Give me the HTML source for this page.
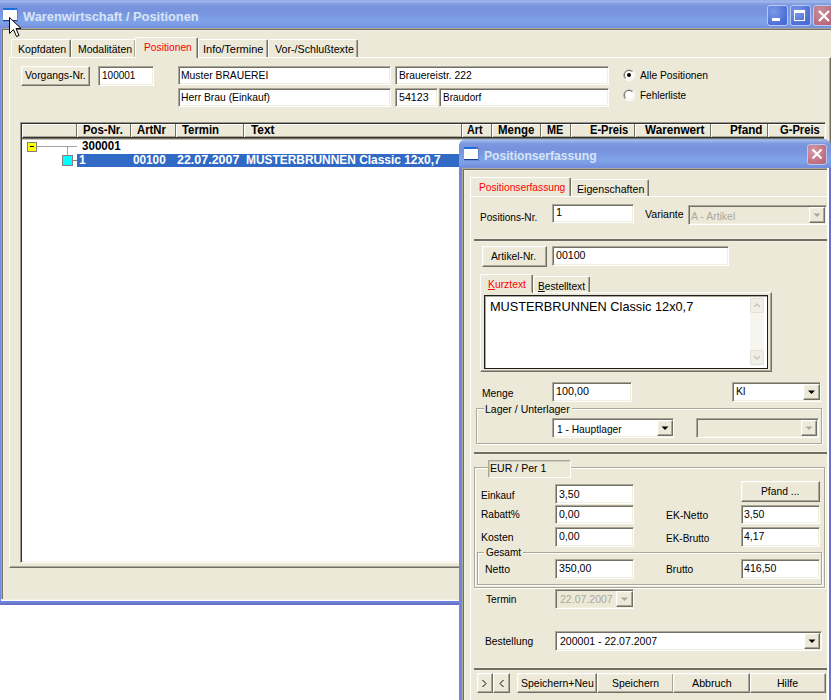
<!DOCTYPE html><html><head><meta charset="utf-8"><style>
html,body{margin:0;padding:0;background:#fff;width:831px;height:700px;overflow:hidden;position:relative}
.a{position:absolute;box-sizing:border-box}
.t{font-family:"Liberation Sans", sans-serif;white-space:nowrap}
</style></head><body>
<div class="a" style="left:0px;top:0px;width:831px;height:28px;background:linear-gradient(to bottom, #8DA5E4 0px, #9DB8EC 1px, #9CB6EB 2px, #8CA5E3 3px, #7D98DE 5px, #7892DD 9px, #7A96E0 14px, #7DA0E6 19px, #7EA3E8 22px, #7C9BE3 25px, #7590DE 27px, #7590DE 28px);"></div>
<div class="a" style="left:0px;top:28px;width:831px;height:573px;background:#ECE9D8;"></div>
<div class="a" style="left:0px;top:28px;width:831px;height:1px;background:#ACA899;"></div>
<div class="a" style="left:1px;top:29px;width:830px;height:1px;background:#716F64;"></div>
<div class="a" style="left:2px;top:30px;width:829px;height:1px;background:#F1EFE2;"></div>
<div class="a" style="left:0px;top:28px;width:1px;height:573px;background:#7489E0;"></div>
<div class="a" style="left:1px;top:28px;width:1px;height:571px;background:#ACA899;"></div>
<div class="a" style="left:2px;top:29px;width:1px;height:570px;background:#716F64;"></div>
<div class="a" style="left:3px;top:30px;width:1px;height:568px;background:#F1EFE2;"></div>
<div class="a" style="left:1px;top:599px;width:458px;height:1px;background:#F1EFE2;"></div>
<div class="a" style="left:1px;top:600px;width:458px;height:1px;background:#FFFFFF;"></div>
<div class="a" style="left:0px;top:601px;width:459px;height:4px;background:linear-gradient(#6C81D8 0,#6C81D8 1px,#7086D8 1px,#7086D8 2px,#6870C8 2px);"></div>
<svg class="a" style="left:3px;top:8px" width="16" height="14"><rect x="14" y="1" width="1" height="13" fill="#5B79CC" opacity="0.8"/><rect x="0" y="13" width="15" height="1" fill="#5B79CC" opacity="0.6"/><rect x="0" y="0" width="14" height="2" fill="#1B6DDC"/><rect x="0" y="2" width="14" height="10" fill="#FDFEFB"/><rect x="0" y="12" width="14" height="1" fill="#1E3F96"/><rect x="12" y="1" width="1" height="1" fill="#E06A55"/></svg>
<div class="a t" style="left:22.70px;top:9.70px;font-size:13px;line-height:13px;font-weight:bold;color:#D8E4F8;transform-origin:0 0;transform:scaleX(0.9871);">Warenwirtschaft / Positionen</div>
<div class="a" style="left:767px;top:5px;width:21px;height:21px;border:1px solid #B9C9F3;border-radius:3px;background:radial-gradient(circle at 30% 30%, #7D9AE8, #4C6FD8 70%, #3F66DA);"><div class="a" style="left:4px;top:12px;width:8px;height:3px;background:#fff"></div></div>
<div class="a" style="left:790px;top:5px;width:21px;height:21px;border:1px solid #B9C9F3;border-radius:3px;background:radial-gradient(circle at 30% 30%, #7D9AE8, #4C6FD8 70%, #3F66DA);"><div class="a" style="left:3px;top:4px;width:11px;height:11px;border:1px solid #fff;border-top-width:3px"></div></div>
<div class="a" style="left:813px;top:5px;width:24px;height:21px;border:1px solid #B9C9F3;border-radius:3px;background:radial-gradient(circle at 30% 30%, #C98F9C, #B86877 70%, #B05E6E);"><svg class="a" style="left:3px;top:3px" width="14" height="14"><path d="M2 2L12 12M12 2L2 12" stroke="#fff" stroke-width="2.2"/></svg></div>
<div class="a" style="left:11px;top:39px;width:60px;height:18px;background:#ECE9D8;border-left:1px solid #fff;border-top:1px solid #fff;border-right:1px solid #716F64;box-shadow:inset -1px 0 #ACA899;border-radius:2px 2px 0 0"></div>
<div class="a" style="left:71px;top:39px;width:65px;height:18px;background:#ECE9D8;border-left:1px solid #fff;border-top:1px solid #fff;border-right:1px solid #716F64;box-shadow:inset -1px 0 #ACA899;border-radius:2px 2px 0 0"></div>
<div class="a" style="left:198px;top:39px;width:70px;height:18px;background:#ECE9D8;border-left:1px solid #fff;border-top:1px solid #fff;border-right:1px solid #716F64;box-shadow:inset -1px 0 #ACA899;border-radius:2px 2px 0 0"></div>
<div class="a" style="left:268px;top:39px;width:90px;height:18px;background:#ECE9D8;border-left:1px solid #fff;border-top:1px solid #fff;border-right:1px solid #716F64;box-shadow:inset -1px 0 #ACA899;border-radius:2px 2px 0 0"></div>
<div class="a" style="left:9px;top:57px;width:822px;height:511px;border-left:1px solid #fff;border-top:1px solid #fff;border-bottom:1px solid #716F64;border-right:1px solid #716F64;box-shadow:inset -1px -1px #ACA899;"></div>
<div class="a" style="left:135px;top:37px;width:63px;height:21px;background:#ECE9D8;border-left:1px solid #fff;border-top:1px solid #fff;border-right:1px solid #716F64;box-shadow:inset -1px 0 #ACA899;border-radius:2px 2px 0 0"></div>
<div class="a" style="left:136px;top:57px;width:60px;height:1px;background:#ECE9D8"></div>
<div class="a t" style="left:18.00px;top:44.19px;font-size:11px;line-height:11px;font-weight:normal;color:#000;transform-origin:0 0;transform:scaleX(0.9613);">Kopfdaten</div>
<div class="a t" style="left:78.20px;top:44.19px;font-size:11px;line-height:11px;font-weight:normal;color:#000;transform-origin:0 0;transform:scaleX(0.9498);">Modalitäten</div>
<div class="a t" style="left:143.70px;top:42.49px;font-size:11px;line-height:11px;font-weight:normal;color:#FF0000;transform-origin:0 0;transform:scaleX(0.9307);">Positionen</div>
<div class="a t" style="left:202.60px;top:44.19px;font-size:11px;line-height:11px;font-weight:normal;color:#000;transform-origin:0 0;transform:scaleX(0.9982);">Info/Termine</div>
<div class="a t" style="left:274.80px;top:44.19px;font-size:11px;line-height:11px;font-weight:normal;color:#000;transform-origin:0 0;transform:scaleX(0.9693);">Vor-/Schlußtexte</div>
<div class="a" style="left:21px;top:66px;width:69px;height:20px;background:#ECE9D8;border-style:solid;border-width:1px;border-color:#FFFFFF #716F64 #716F64 #FFFFFF;box-shadow:inset -1px -1px #ACA899, inset 1px 1px #F1EFE2;"></div>
<div class="a t" style="left:24.50px;top:69.99px;font-size:11px;line-height:11px;font-weight:normal;color:#000;transform-origin:0 0;transform:scaleX(0.9463);">Vorgangs-Nr.</div>
<div class="a" style="left:98px;top:66px;width:56px;height:20px;background:#fff;border-style:solid;border-width:1px;border-color:#ACA899 #FFFFFF #FFFFFF #ACA899;box-shadow:inset 1px 1px #716F64, inset -1px -1px #F1EFE2;"></div>
<div class="a t" style="left:101.70px;top:70.29px;font-size:11px;line-height:11px;font-weight:normal;color:#000;transform-origin:0 0;transform:scaleX(0.9101);">100001</div>
<div class="a" style="left:178px;top:66px;width:213px;height:19px;background:#fff;border-style:solid;border-width:1px;border-color:#ACA899 #FFFFFF #FFFFFF #ACA899;box-shadow:inset 1px 1px #716F64, inset -1px -1px #F1EFE2;"></div>
<div class="a t" style="left:181.00px;top:70.29px;font-size:11px;line-height:11px;font-weight:normal;color:#000;transform-origin:0 0;transform:scaleX(0.9402);">Muster BRAUEREI</div>
<div class="a" style="left:178px;top:88px;width:213px;height:19px;background:#fff;border-style:solid;border-width:1px;border-color:#ACA899 #FFFFFF #FFFFFF #ACA899;box-shadow:inset 1px 1px #716F64, inset -1px -1px #F1EFE2;"></div>
<div class="a t" style="left:181.00px;top:91.69px;font-size:11px;line-height:11px;font-weight:normal;color:#000;transform-origin:0 0;transform:scaleX(0.9395);">Herr Brau (Einkauf)</div>
<div class="a" style="left:395px;top:66px;width:214px;height:19px;background:#fff;border-style:solid;border-width:1px;border-color:#ACA899 #FFFFFF #FFFFFF #ACA899;box-shadow:inset 1px 1px #716F64, inset -1px -1px #F1EFE2;"></div>
<div class="a t" style="left:398.50px;top:70.29px;font-size:11px;line-height:11px;font-weight:normal;color:#000;transform-origin:0 0;transform:scaleX(0.9350);">Brauereistr. 222</div>
<div class="a" style="left:395px;top:88px;width:43px;height:19px;background:#fff;border-style:solid;border-width:1px;border-color:#ACA899 #FFFFFF #FFFFFF #ACA899;box-shadow:inset 1px 1px #716F64, inset -1px -1px #F1EFE2;"></div>
<div class="a t" style="left:398.50px;top:91.69px;font-size:11px;line-height:11px;font-weight:normal;color:#000;transform-origin:0 0;transform:scaleX(0.9681);">54123</div>
<div class="a" style="left:439px;top:88px;width:170px;height:19px;background:#fff;border-style:solid;border-width:1px;border-color:#ACA899 #FFFFFF #FFFFFF #ACA899;box-shadow:inset 1px 1px #716F64, inset -1px -1px #F1EFE2;"></div>
<div class="a t" style="left:442.70px;top:91.69px;font-size:11px;line-height:11px;font-weight:normal;color:#000;transform-origin:0 0;transform:scaleX(0.9088);">Braudorf</div>
<svg class="a" style="left:623px;top:69px" width="12" height="12"><circle cx="6" cy="6" r="6" fill="#fff"/><path d="M1.76 10.24A6 6 0 0 1 10.24 1.76L6 6Z" fill="#ACA899"/><circle cx="6" cy="6" r="5" fill="#F1EFE2"/><path d="M2.46 9.54A5 5 0 0 1 9.54 2.46L6 6Z" fill="#716F64"/><circle cx="6" cy="6" r="4" fill="#fff"/><circle cx="6" cy="6" r="2" fill="#000"/></svg>
<svg class="a" style="left:623px;top:89px" width="12" height="12"><circle cx="6" cy="6" r="6" fill="#fff"/><path d="M1.76 10.24A6 6 0 0 1 10.24 1.76L6 6Z" fill="#ACA899"/><circle cx="6" cy="6" r="5" fill="#F1EFE2"/><path d="M2.46 9.54A5 5 0 0 1 9.54 2.46L6 6Z" fill="#716F64"/><circle cx="6" cy="6" r="4" fill="#fff"/></svg>
<div class="a t" style="left:639.80px;top:70.09px;font-size:11px;line-height:11px;font-weight:normal;color:#000;transform-origin:0 0;transform:scaleX(0.9346);">Alle Positionen</div>
<div class="a t" style="left:640.00px;top:90.29px;font-size:11px;line-height:11px;font-weight:normal;color:#000;transform-origin:0 0;transform:scaleX(0.9087);">Fehlerliste</div>
<div class="a" style="left:20px;top:122px;width:806px;height:441px;background:#fff;border-style:solid;border-width:1px;border-color:#9A988C #fff #fff #9A988C;box-shadow:inset 1px 1px #35332E, inset -1px -1px #F1EFE2;"></div>
<div class="a" style="left:22px;top:124px;width:802px;height:14px;background:#ECE9D8;border-top:1px solid #fff;border-left:1px solid #fff;border-bottom:1px solid #35332E;box-shadow:inset 0 -1px #ACA899"></div>
<div class="a" style="left:22px;top:138px;width:802px;height:1px;background:#716F64"></div>
<div class="a" style="left:22px;top:139px;width:802px;height:1px;background:#C4C2B8"></div>
<div class="a" style="left:76px;top:124px;width:1px;height:13px;background:#716F64"></div>
<div class="a" style="left:77px;top:124px;width:1px;height:13px;background:#fff"></div>
<div class="a" style="left:130px;top:124px;width:1px;height:13px;background:#716F64"></div>
<div class="a" style="left:131px;top:124px;width:1px;height:13px;background:#fff"></div>
<div class="a" style="left:175px;top:124px;width:1px;height:13px;background:#716F64"></div>
<div class="a" style="left:176px;top:124px;width:1px;height:13px;background:#fff"></div>
<div class="a" style="left:243px;top:124px;width:1px;height:13px;background:#716F64"></div>
<div class="a" style="left:244px;top:124px;width:1px;height:13px;background:#fff"></div>
<div class="a" style="left:461px;top:124px;width:1px;height:13px;background:#716F64"></div>
<div class="a" style="left:462px;top:124px;width:1px;height:13px;background:#fff"></div>
<div class="a" style="left:491px;top:124px;width:1px;height:13px;background:#716F64"></div>
<div class="a" style="left:492px;top:124px;width:1px;height:13px;background:#fff"></div>
<div class="a" style="left:540px;top:124px;width:1px;height:13px;background:#716F64"></div>
<div class="a" style="left:541px;top:124px;width:1px;height:13px;background:#fff"></div>
<div class="a" style="left:570px;top:124px;width:1px;height:13px;background:#716F64"></div>
<div class="a" style="left:571px;top:124px;width:1px;height:13px;background:#fff"></div>
<div class="a" style="left:634px;top:124px;width:1px;height:13px;background:#716F64"></div>
<div class="a" style="left:635px;top:124px;width:1px;height:13px;background:#fff"></div>
<div class="a" style="left:710px;top:124px;width:1px;height:13px;background:#716F64"></div>
<div class="a" style="left:711px;top:124px;width:1px;height:13px;background:#fff"></div>
<div class="a" style="left:767px;top:124px;width:1px;height:13px;background:#716F64"></div>
<div class="a" style="left:768px;top:124px;width:1px;height:13px;background:#fff"></div>
<div class="a t" style="left:83.20px;top:124.34px;font-size:12px;line-height:12px;font-weight:bold;color:#000;transform-origin:0 0;transform:scaleX(0.9477);">Pos-Nr.</div>
<div class="a t" style="left:137.20px;top:124.34px;font-size:12px;line-height:12px;font-weight:bold;color:#000;transform-origin:0 0;transform:scaleX(0.9388);">ArtNr</div>
<div class="a t" style="left:182.00px;top:124.34px;font-size:12px;line-height:12px;font-weight:bold;color:#000;transform-origin:0 0;transform:scaleX(0.9462);">Termin</div>
<div class="a t" style="left:251.00px;top:124.34px;font-size:12px;line-height:12px;font-weight:bold;color:#000;transform-origin:0 0;transform:scaleX(0.9879);">Text</div>
<div class="a t" style="left:467.00px;top:124.34px;font-size:12px;line-height:12px;font-weight:bold;color:#000;transform-origin:0 0;transform:scaleX(0.8941);">Art</div>
<div class="a t" style="left:498.00px;top:124.34px;font-size:12px;line-height:12px;font-weight:bold;color:#000;transform-origin:0 0;transform:scaleX(0.9575);">Menge</div>
<div class="a t" style="left:546.70px;top:124.34px;font-size:12px;line-height:12px;font-weight:bold;color:#000;transform-origin:0 0;transform:scaleX(0.9058);">ME</div>
<div class="a t" style="left:590.00px;top:124.34px;font-size:12px;line-height:12px;font-weight:bold;color:#000;transform-origin:0 0;transform:scaleX(0.9261);">E-Preis</div>
<div class="a t" style="left:645.00px;top:124.34px;font-size:12px;line-height:12px;font-weight:bold;color:#000;transform-origin:0 0;transform:scaleX(0.9769);">Warenwert</div>
<div class="a t" style="left:730.40px;top:124.34px;font-size:12px;line-height:12px;font-weight:bold;color:#000;transform-origin:0 0;transform:scaleX(0.9756);">Pfand</div>
<div class="a t" style="left:780.00px;top:124.34px;font-size:12px;line-height:12px;font-weight:bold;color:#000;transform-origin:0 0;transform:scaleX(0.9300);">G-Preis</div>
<div class="a" style="left:27px;top:142px;width:10px;height:10px;background:#FFFF00;border:1px solid #808080"></div>
<div class="a" style="left:30px;top:146px;width:4px;height:1px;background:#000"></div>
<div class="a" style="left:37px;top:146px;width:40px;height:1px;background:#A0A0A0"></div>
<div class="a" style="left:67px;top:146px;width:1px;height:9px;background:#A0A0A0"></div>
<div class="a t" style="left:82.00px;top:140.34px;font-size:12px;line-height:12px;font-weight:bold;color:#000;transform-origin:0 0;transform:scaleX(0.9661);">300001</div>
<div class="a" style="left:62px;top:155px;width:11px;height:11px;background:#00FFFF;border:1px solid #808080"></div>
<div class="a" style="left:73px;top:160px;width:4px;height:1px;background:#808080"></div>
<div class="a" style="left:77px;top:154px;width:384px;height:13px;background:#316AC5"></div>
<div class="a t" style="left:79px;top:154.44px;font-size:12px;line-height:12px;font-weight:bold;color:#fff;letter-spacing:0px;">1</div>
<div class="a t" style="left:133.00px;top:154.44px;font-size:12px;line-height:12px;font-weight:bold;color:#fff;transform-origin:0 0;transform:scaleX(0.9794);">00100</div>
<div class="a t" style="left:177.00px;top:154.44px;font-size:12px;line-height:12px;font-weight:bold;color:#fff;transform-origin:0 0;transform:scaleX(1.0383);">22.07.2007</div>
<div class="a t" style="left:245.80px;top:154.44px;font-size:12px;line-height:12px;font-weight:bold;color:#fff;transform-origin:0 0;transform:scaleX(0.9924);">MUSTERBRUNNEN Classic 12x0,7</div>
<svg class="a" style="left:8px;top:16px" width="16" height="24"><path d="M1.5 1.5L1.5 17.5L5.5 13.5L8.5 20.5L11 19.5L8 12.5L13 12.5Z" fill="#fff" stroke="#000" stroke-width="1" stroke-linejoin="miter"/></svg>
<div class="a" style="left:459px;top:139px;width:372px;height:561px;background:#6F87D8;border-radius:8px 8px 0 0"></div>
<div class="a" style="left:459px;top:139px;width:372px;height:29px;background:linear-gradient(to bottom, #8DA5E4 0px, #9DB8EC 1px, #9CB6EB 2px, #8CA5E3 3px, #7D98DE 5px, #7892DD 9px, #7A96E0 14px, #7DA0E6 19px, #7EA3E8 22px, #7C9BE3 25px, #7590DE 27px, #7590DE 28px);border-radius:7px 7px 0 0"></div>
<div class="a" style="left:462px;top:168px;width:366px;height:532px;background:#ECE9D8;"></div>
<div class="a" style="left:462px;top:168px;width:366px;height:1px;background:#ACA899"></div>
<div class="a" style="left:462px;top:168px;width:1px;height:532px;background:#ACA899"></div>
<div class="a" style="left:463px;top:169px;width:365px;height:1px;background:#716F64"></div>
<div class="a" style="left:463px;top:169px;width:1px;height:531px;background:#716F64"></div>
<div class="a" style="left:464px;top:170px;width:363px;height:1px;background:#F1EFE2"></div>
<div class="a" style="left:464px;top:170px;width:1px;height:530px;background:#F1EFE2"></div>
<div class="a" style="left:827px;top:168px;width:2px;height:532px;background:#FFFFFF"></div>
<div class="a" style="left:829px;top:168px;width:2px;height:532px;background:#6A70CB"></div>
<svg class="a" style="left:464px;top:147px" width="16" height="14"><rect x="14" y="1" width="1" height="13" fill="#5B79CC" opacity="0.8"/><rect x="0" y="13" width="15" height="1" fill="#5B79CC" opacity="0.6"/><rect x="0" y="0" width="14" height="2" fill="#1B6DDC"/><rect x="0" y="2" width="14" height="10" fill="#FDFEFB"/><rect x="0" y="12" width="14" height="1" fill="#1E3F96"/><rect x="12" y="1" width="1" height="1" fill="#E06A55"/></svg>
<div class="a t" style="left:483.70px;top:149.00px;font-size:13px;line-height:13px;font-weight:bold;color:#D8E4F8;transform-origin:0 0;transform:scaleX(0.9329);">Positionserfassung</div>
<div class="a" style="left:807px;top:144px;width:20px;height:21px;border:1px solid #B9C9F3;border-radius:3px;background:radial-gradient(circle at 30% 30%, #D29AA6, #BE6E7E 70%, #B56576);"><svg class="a" style="left:2px;top:2px" width="14" height="14"><path d="M2.5 2.5L11.5 11.5M11.5 2.5L2.5 11.5" stroke="#fff" stroke-width="2.2"/></svg></div>
<div class="a" style="left:470px;top:196px;width:357px;height:504px;border-left:1px solid #fff;border-top:1px solid #fff;"></div>
<div class="a" style="left:571px;top:179px;width:78px;height:17px;background:#ECE9D8;border-left:1px solid #fff;border-top:1px solid #fff;border-right:1px solid #716F64;box-shadow:inset -1px 0 #ACA899;border-radius:2px 2px 0 0"></div>
<div class="a" style="left:470px;top:177px;width:101px;height:19px;background:#ECE9D8;border-left:1px solid #fff;border-top:1px solid #fff;border-right:1px solid #716F64;box-shadow:inset -1px 0 #ACA899;border-radius:2px 2px 0 0"></div>
<div class="a t" style="left:479.10px;top:182.09px;font-size:11px;line-height:11px;font-weight:normal;color:#FF0000;transform-origin:0 0;transform:scaleX(0.9286);">Positionserfassung</div>
<div class="a t" style="left:577.20px;top:183.69px;font-size:11px;line-height:11px;font-weight:normal;color:#000;transform-origin:0 0;transform:scaleX(0.9655);">Eigenschaften</div>
<div class="a t" style="left:480.40px;top:212.39px;font-size:11px;line-height:11px;font-weight:normal;color:#000;transform-origin:0 0;transform:scaleX(0.9182);">Positions-Nr.</div>
<div class="a" style="left:552px;top:204px;width:82px;height:19px;background:#fff;border-style:solid;border-width:1px;border-color:#ACA899 #FFFFFF #FFFFFF #ACA899;box-shadow:inset 1px 1px #716F64, inset -1px -1px #F1EFE2;"></div>
<div class="a t" style="left:556px;top:207.49px;font-size:11px;line-height:11px;font-weight:normal;color:#000;letter-spacing:-0.3px;">1</div>
<div class="a t" style="left:645.00px;top:209.49px;font-size:11px;line-height:11px;font-weight:normal;color:#000;transform-origin:0 0;transform:scaleX(0.9616);">Variante</div>
<div class="a" style="left:688px;top:205px;width:139px;height:20px;background:#ECE9D8;border-style:solid;border-width:1px;border-color:#ACA899 #FFFFFF #FFFFFF #ACA899;box-shadow:inset 1px 1px #716F64, inset -1px -1px #F1EFE2;"></div>
<div class="a t" style="left:691.30px;top:210.69px;font-size:11px;line-height:11px;font-weight:normal;color:#ACA899;transform-origin:0 0;transform:scaleX(0.9528);">A - Artikel</div>
<div class="a" style="left:809px;top:207px;width:16px;height:16px;background:#ECE9D8;border-style:solid;border-width:1px;border-color:#FFFFFF #716F64 #716F64 #FFFFFF;box-shadow:inset -1px -1px #ACA899, inset 1px 1px #F1EFE2;"></div>
<svg class="a" style="left:809px;top:207px" width="16" height="16"><path d="M4.5 6.5h7l-3.5 3.5z" fill="#ACA899"/></svg>
<div class="a" style="left:474px;top:238px;width:353px;height:1px;background:#F1EFE2"></div>
<div class="a" style="left:474px;top:239px;width:353px;height:2px;background:#716F64"></div>
<div class="a" style="left:474px;top:241px;width:353px;height:1px;background:#F1EFE2"></div>
<div class="a" style="left:482px;top:246px;width:65px;height:21px;background:#ECE9D8;border-style:solid;border-width:1px;border-color:#FFFFFF #716F64 #716F64 #FFFFFF;box-shadow:inset -1px -1px #ACA899, inset 1px 1px #F1EFE2;"></div>
<div class="a t" style="left:491.00px;top:250.89px;font-size:11px;line-height:11px;font-weight:normal;color:#000;transform-origin:0 0;transform:scaleX(0.9331);">Artikel-Nr.</div>
<div class="a" style="left:552px;top:246px;width:177px;height:20px;background:#fff;border-style:solid;border-width:1px;border-color:#ACA899 #FFFFFF #FFFFFF #ACA899;box-shadow:inset 1px 1px #716F64, inset -1px -1px #F1EFE2;"></div>
<div class="a t" style="left:555.80px;top:250.29px;font-size:11px;line-height:11px;font-weight:normal;color:#000;transform-origin:0 0;transform:scaleX(0.9649);">00100</div>
<div class="a" style="left:533px;top:276px;width:57px;height:16px;background:#ECE9D8;border-left:1px solid #fff;border-top:1px solid #fff;border-right:1px solid #716F64;box-shadow:inset -1px 0 #ACA899;border-radius:2px 2px 0 0"></div>
<div class="a" style="left:480px;top:292px;width:292px;height:80px;border-left:1px solid #fff;border-top:1px solid #fff;border-right:1px solid #716F64;border-bottom:1px solid #716F64;box-shadow:inset -1px -1px #ACA899"></div>
<div class="a" style="left:480px;top:274px;width:53px;height:19px;background:#ECE9D8;border-left:1px solid #fff;border-top:1px solid #fff;border-right:1px solid #716F64;box-shadow:inset -1px 0 #ACA899;border-radius:2px 2px 0 0"></div>
<div class="a" style="left:481px;top:292px;width:51px;height:1px;background:#ECE9D8"></div>
<div class="a t" style="left:488.40px;top:278.89px;font-size:11px;line-height:11px;font-weight:normal;color:#FF0000;transform-origin:0 0;transform:scaleX(0.9406);"><u>K</u>urztext</div>
<div class="a t" style="left:538.00px;top:280.69px;font-size:11px;line-height:11px;font-weight:normal;color:#000;transform-origin:0 0;transform:scaleX(0.9272);"><u>B</u>estelltext</div>
<div class="a" style="left:484px;top:295px;width:284px;height:74px;background:#fff;border:1px solid #1E1E1E;box-shadow:inset 1px 1px #ACA899"></div>
<div class="a t" style="left:489.92px;top:299.80px;font-size:13px;line-height:13px;font-weight:normal;color:#000;transform-origin:0 0;transform:scaleX(0.9802);">MUSTERBRUNNEN Classic 12x0,7</div>
<div class="a" style="left:750px;top:297px;width:14px;height:69px;background:#F6F5EF"></div>
<div class="a" style="left:750px;top:298px;width:14px;height:15px;background:#EFEEE7;border:1px solid #E3E1D7;border-radius:2px"></div>
<div class="a" style="left:750px;top:350px;width:14px;height:15px;background:#EFEEE7;border:1px solid #E3E1D7;border-radius:2px"></div>
<svg class="a" style="left:750px;top:298px" width="14" height="15"><path d="M4 9L7 6L10 9" stroke="#C9C7BA" stroke-width="1.5" fill="none"/></svg>
<svg class="a" style="left:750px;top:350px" width="14" height="15"><path d="M4 6L7 9L10 6" stroke="#C9C7BA" stroke-width="1.5" fill="none"/></svg>
<div class="a t" style="left:482.30px;top:387.89px;font-size:11px;line-height:11px;font-weight:normal;color:#000;transform-origin:0 0;transform:scaleX(0.9369);">Menge</div>
<div class="a" style="left:552px;top:382px;width:80px;height:20px;background:#fff;border-style:solid;border-width:1px;border-color:#ACA899 #FFFFFF #FFFFFF #ACA899;box-shadow:inset 1px 1px #716F64, inset -1px -1px #F1EFE2;"></div>
<div class="a t" style="left:555.50px;top:386.29px;font-size:11px;line-height:11px;font-weight:normal;color:#000;transform-origin:0 0;transform:scaleX(0.9783);">100,00</div>
<div class="a" style="left:732px;top:382px;width:89px;height:20px;background:#fff;border-style:solid;border-width:1px;border-color:#ACA899 #FFFFFF #FFFFFF #ACA899;box-shadow:inset 1px 1px #716F64, inset -1px -1px #F1EFE2;"></div>
<div class="a t" style="left:736.00px;top:386.29px;font-size:11px;line-height:11px;font-weight:normal;color:#000;transform-origin:0 0;transform:scaleX(0.9639);">Kl</div>
<div class="a" style="left:803px;top:384px;width:17px;height:16px;background:#ECE9D8;border-style:solid;border-width:1px;border-color:#FFFFFF #716F64 #716F64 #FFFFFF;box-shadow:inset -1px -1px #ACA899, inset 1px 1px #F1EFE2;"></div>
<svg class="a" style="left:803px;top:384px" width="17" height="16"><path d="M5.0 6.5h7l-3.5 3.5z" fill="#000"/></svg>
<div class="a" style="left:476px;top:408px;width:346px;height:36px;border:1px solid #ACA899;box-shadow:1px 1px #fff, inset 1px 1px #fff;"></div>
<div class="a" style="left:484px;top:403px;width:88px;height:13px;background:#ECE9D8"></div>
<div class="a t" style="left:485.00px;top:403.99px;font-size:11px;line-height:11px;font-weight:normal;color:#000;transform-origin:0 0;transform:scaleX(0.9551);">Lager / Unterlager</div>
<div class="a" style="left:552px;top:418px;width:122px;height:20px;background:#fff;border-style:solid;border-width:1px;border-color:#ACA899 #FFFFFF #FFFFFF #ACA899;box-shadow:inset 1px 1px #716F64, inset -1px -1px #F1EFE2;"></div>
<div class="a t" style="left:557.00px;top:423.69px;font-size:11px;line-height:11px;font-weight:normal;color:#000;transform-origin:0 0;transform:scaleX(0.9280);">1 - Hauptlager</div>
<div class="a" style="left:657px;top:420px;width:16px;height:16px;background:#ECE9D8;border-style:solid;border-width:1px;border-color:#FFFFFF #716F64 #716F64 #FFFFFF;box-shadow:inset -1px -1px #ACA899, inset 1px 1px #F1EFE2;"></div>
<svg class="a" style="left:657px;top:420px" width="16" height="16"><path d="M4.5 6.5h7l-3.5 3.5z" fill="#000"/></svg>
<div class="a" style="left:696px;top:418px;width:123px;height:20px;background:#ECE9D8;border-style:solid;border-width:1px;border-color:#ACA899 #FFFFFF #FFFFFF #ACA899;box-shadow:inset 1px 1px #716F64, inset -1px -1px #F1EFE2;"></div>
<div class="a" style="left:801px;top:420px;width:16px;height:16px;background:#ECE9D8;border-style:solid;border-width:1px;border-color:#FFFFFF #716F64 #716F64 #FFFFFF;box-shadow:inset -1px -1px #ACA899, inset 1px 1px #F1EFE2;"></div>
<svg class="a" style="left:801px;top:420px" width="16" height="16"><path d="M4.5 6.5h7l-3.5 3.5z" fill="#ACA899"/></svg>
<div class="a" style="left:474px;top:451px;width:353px;height:1px;background:#F1EFE2"></div>
<div class="a" style="left:474px;top:452px;width:353px;height:2px;background:#716F64"></div>
<div class="a" style="left:474px;top:454px;width:353px;height:1px;background:#F1EFE2"></div>
<div class="a" style="left:474px;top:467px;width:351px;height:121px;border:1px solid #ACA899;box-shadow:1px 1px #fff, inset 1px 1px #fff;"></div>
<div class="a" style="left:488px;top:460px;width:83px;height:18px;background:#ECE9D8;border:1px solid #fff;border-color:#ACA899 #fff #fff #ACA899;box-shadow:inset 1px 1px #CFCCBC"></div>
<div class="a t" style="left:489.70px;top:462.69px;font-size:11px;line-height:11px;font-weight:normal;color:#000;transform-origin:0 0;transform:scaleX(0.9613);">EUR / Per 1</div>
<div class="a t" style="left:480.50px;top:489.69px;font-size:11px;line-height:11px;font-weight:normal;color:#000;transform-origin:0 0;transform:scaleX(0.9114);">Einkauf</div>
<div class="a" style="left:555px;top:484px;width:79px;height:20px;background:#fff;border-style:solid;border-width:1px;border-color:#ACA899 #FFFFFF #FFFFFF #ACA899;box-shadow:inset 1px 1px #716F64, inset -1px -1px #F1EFE2;"></div>
<div class="a t" style="left:558.90px;top:488.59px;font-size:11px;line-height:11px;font-weight:normal;color:#000;transform-origin:0 0;transform:scaleX(0.9581);">3,50</div>
<div class="a t" style="left:480.50px;top:509.49px;font-size:11px;line-height:11px;font-weight:normal;color:#000;transform-origin:0 0;transform:scaleX(0.9173);">Rabatt%</div>
<div class="a" style="left:555px;top:505px;width:79px;height:19px;background:#fff;border-style:solid;border-width:1px;border-color:#ACA899 #FFFFFF #FFFFFF #ACA899;box-shadow:inset 1px 1px #716F64, inset -1px -1px #F1EFE2;"></div>
<div class="a t" style="left:558.90px;top:508.99px;font-size:11px;line-height:11px;font-weight:normal;color:#000;transform-origin:0 0;transform:scaleX(0.9581);">0,00</div>
<div class="a t" style="left:480.50px;top:532.29px;font-size:11px;line-height:11px;font-weight:normal;color:#000;transform-origin:0 0;transform:scaleX(0.9523);">Kosten</div>
<div class="a" style="left:555px;top:527px;width:79px;height:20px;background:#fff;border-style:solid;border-width:1px;border-color:#ACA899 #FFFFFF #FFFFFF #ACA899;box-shadow:inset 1px 1px #716F64, inset -1px -1px #F1EFE2;"></div>
<div class="a t" style="left:558.90px;top:531.39px;font-size:11px;line-height:11px;font-weight:normal;color:#000;transform-origin:0 0;transform:scaleX(0.9581);">0,00</div>
<div class="a" style="left:741px;top:481px;width:79px;height:21px;background:#ECE9D8;border-style:solid;border-width:1px;border-color:#FFFFFF #716F64 #716F64 #FFFFFF;box-shadow:inset -1px -1px #ACA899, inset 1px 1px #F1EFE2;"></div>
<div class="a t" style="left:760.70px;top:485.89px;font-size:11px;line-height:11px;font-weight:normal;color:#000;transform-origin:0 0;transform:scaleX(0.9361);">Pfand ...</div>
<div class="a t" style="left:665.70px;top:510.09px;font-size:11px;line-height:11px;font-weight:normal;color:#000;transform-origin:0 0;transform:scaleX(0.9458);">EK-Netto</div>
<div class="a" style="left:741px;top:505px;width:79px;height:19px;background:#fff;border-style:solid;border-width:1px;border-color:#ACA899 #FFFFFF #FFFFFF #ACA899;box-shadow:inset 1px 1px #716F64, inset -1px -1px #F1EFE2;"></div>
<div class="a t" style="left:743.90px;top:508.99px;font-size:11px;line-height:11px;font-weight:normal;color:#000;transform-origin:0 0;transform:scaleX(0.9487);">3,50</div>
<div class="a t" style="left:665.70px;top:532.59px;font-size:11px;line-height:11px;font-weight:normal;color:#000;transform-origin:0 0;transform:scaleX(0.9103);">EK-Brutto</div>
<div class="a" style="left:741px;top:527px;width:79px;height:20px;background:#fff;border-style:solid;border-width:1px;border-color:#ACA899 #FFFFFF #FFFFFF #ACA899;box-shadow:inset 1px 1px #716F64, inset -1px -1px #F1EFE2;"></div>
<div class="a t" style="left:743.90px;top:531.39px;font-size:11px;line-height:11px;font-weight:normal;color:#000;transform-origin:0 0;transform:scaleX(0.9487);">4,17</div>
<div class="a" style="left:477px;top:552px;width:345px;height:33px;border:1px solid #ACA899;box-shadow:1px 1px #fff, inset 1px 1px #fff;"></div>
<div class="a" style="left:484px;top:546px;width:39px;height:12px;background:#ECE9D8"></div>
<div class="a t" style="left:486.00px;top:547.19px;font-size:11px;line-height:11px;font-weight:normal;color:#000;transform-origin:0 0;transform:scaleX(0.9102);">Gesamt</div>
<div class="a t" style="left:485.00px;top:563.69px;font-size:11px;line-height:11px;font-weight:normal;color:#000;transform-origin:0 0;transform:scaleX(0.9552);">Netto</div>
<div class="a" style="left:555px;top:559px;width:79px;height:20px;background:#fff;border-style:solid;border-width:1px;border-color:#ACA899 #FFFFFF #FFFFFF #ACA899;box-shadow:inset 1px 1px #716F64, inset -1px -1px #F1EFE2;"></div>
<div class="a t" style="left:558.90px;top:562.79px;font-size:11px;line-height:11px;font-weight:normal;color:#000;transform-origin:0 0;transform:scaleX(0.9604);">350,00</div>
<div class="a t" style="left:665.70px;top:564.09px;font-size:11px;line-height:11px;font-weight:normal;color:#000;transform-origin:0 0;transform:scaleX(0.9306);">Brutto</div>
<div class="a" style="left:741px;top:559px;width:79px;height:20px;background:#fff;border-style:solid;border-width:1px;border-color:#ACA899 #FFFFFF #FFFFFF #ACA899;box-shadow:inset 1px 1px #716F64, inset -1px -1px #F1EFE2;"></div>
<div class="a t" style="left:743.90px;top:562.79px;font-size:11px;line-height:11px;font-weight:normal;color:#000;transform-origin:0 0;transform:scaleX(0.9604);">416,50</div>
<div class="a t" style="left:485.90px;top:593.59px;font-size:11px;line-height:11px;font-weight:normal;color:#000;transform-origin:0 0;transform:scaleX(0.9244);">Termin</div>
<div class="a" style="left:555px;top:589px;width:79px;height:20px;background:#ECE9D8;border-style:solid;border-width:1px;border-color:#ACA899 #FFFFFF #FFFFFF #ACA899;box-shadow:inset 1px 1px #716F64, inset -1px -1px #F1EFE2;"></div>
<div class="a t" style="left:559.70px;top:594.19px;font-size:11px;line-height:11px;font-weight:normal;color:#ACA899;transform-origin:0 0;transform:scaleX(0.9575);">22.07.2007</div>
<div class="a" style="left:616px;top:591px;width:17px;height:16px;background:#ECE9D8;border-style:solid;border-width:1px;border-color:#FFFFFF #716F64 #716F64 #FFFFFF;box-shadow:inset -1px -1px #ACA899, inset 1px 1px #F1EFE2;"></div>
<svg class="a" style="left:616px;top:591px" width="17" height="16"><path d="M5.0 6.5h7l-3.5 3.5z" fill="#ACA899"/></svg>
<div class="a t" style="left:485.20px;top:635.89px;font-size:11px;line-height:11px;font-weight:normal;color:#000;transform-origin:0 0;transform:scaleX(0.9366);">Bestellung</div>
<div class="a" style="left:555px;top:631px;width:267px;height:20px;background:#fff;border-style:solid;border-width:1px;border-color:#ACA899 #FFFFFF #FFFFFF #ACA899;box-shadow:inset 1px 1px #716F64, inset -1px -1px #F1EFE2;"></div>
<div class="a t" style="left:559.70px;top:635.69px;font-size:11px;line-height:11px;font-weight:normal;color:#000;transform-origin:0 0;transform:scaleX(0.9564);">200001 - 22.07.2007</div>
<div class="a" style="left:804px;top:633px;width:16px;height:16px;background:#ECE9D8;border-style:solid;border-width:1px;border-color:#FFFFFF #716F64 #716F64 #FFFFFF;box-shadow:inset -1px -1px #ACA899, inset 1px 1px #F1EFE2;"></div>
<svg class="a" style="left:804px;top:633px" width="16" height="16"><path d="M4.5 6.5h7l-3.5 3.5z" fill="#000"/></svg>
<div class="a" style="left:474px;top:667px;width:353px;height:1px;background:#F1EFE2"></div>
<div class="a" style="left:474px;top:668px;width:353px;height:2px;background:#716F64"></div>
<div class="a" style="left:474px;top:670px;width:353px;height:1px;background:#F1EFE2"></div>
<div class="a" style="left:477px;top:673px;width:16px;height:20px;background:#ECE9D8;border-style:solid;border-width:1px;border-color:#FFFFFF #716F64 #716F64 #FFFFFF;box-shadow:inset -1px -1px #ACA899, inset 1px 1px #F1EFE2;"></div>
<svg class="a" style="left:477px;top:673px" width="16" height="20"><path d="M5.5 7L9 10.5L5.5 14" stroke="#000" stroke-width="1" fill="none"/></svg>
<div class="a" style="left:493px;top:673px;width:17px;height:20px;background:#ECE9D8;border-style:solid;border-width:1px;border-color:#FFFFFF #716F64 #716F64 #FFFFFF;box-shadow:inset -1px -1px #ACA899, inset 1px 1px #F1EFE2;"></div>
<svg class="a" style="left:493px;top:673px" width="17" height="20"><path d="M10.5 7L7 10.5L10.5 14" stroke="#000" stroke-width="1" fill="none"/></svg>
<div class="a" style="left:517px;top:673px;width:80px;height:20px;background:#ECE9D8;border-style:solid;border-width:1px;border-color:#FFFFFF #716F64 #716F64 #FFFFFF;box-shadow:inset -1px -1px #ACA899, inset 1px 1px #F1EFE2;"></div>
<div class="a t" style="left:520.60px;top:678.19px;font-size:11px;line-height:11px;font-weight:normal;color:#000;transform-origin:0 0;transform:scaleX(0.9564);">Speichern+Neu</div>
<div class="a" style="left:597px;top:673px;width:77px;height:20px;background:#ECE9D8;border-style:solid;border-width:1px;border-color:#FFFFFF #716F64 #716F64 #FFFFFF;box-shadow:inset -1px -1px #ACA899, inset 1px 1px #F1EFE2;"></div>
<div class="a t" style="left:611.80px;top:678.19px;font-size:11px;line-height:11px;font-weight:normal;color:#000;transform-origin:0 0;transform:scaleX(0.9491);">Speichern</div>
<div class="a" style="left:673px;top:673px;width:77px;height:20px;background:#ECE9D8;border-style:solid;border-width:1px;border-color:#FFFFFF #716F64 #716F64 #FFFFFF;box-shadow:inset -1px -1px #ACA899, inset 1px 1px #F1EFE2;"></div>
<div class="a t" style="left:691.50px;top:678.19px;font-size:11px;line-height:11px;font-weight:normal;color:#000;transform-origin:0 0;transform:scaleX(0.9718);">Abbruch</div>
<div class="a" style="left:750px;top:673px;width:76px;height:20px;background:#ECE9D8;border-style:solid;border-width:1px;border-color:#FFFFFF #716F64 #716F64 #FFFFFF;box-shadow:inset -1px -1px #ACA899, inset 1px 1px #F1EFE2;"></div>
<div class="a t" style="left:777.00px;top:678.19px;font-size:11px;line-height:11px;font-weight:normal;color:#000;transform-origin:0 0;transform:scaleX(0.9594);">Hilfe</div>
</body></html>
